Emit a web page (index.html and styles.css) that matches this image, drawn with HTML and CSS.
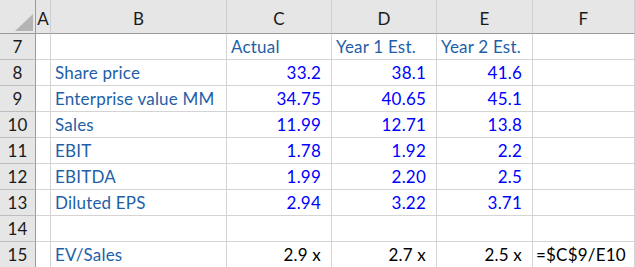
FILE: index.html
```html
<!DOCTYPE html>
<html>
<head>
<meta charset="utf-8">
<link rel="stylesheet" href="styles.css">
</head>
<body>
<div class="sheet">
  <div class="hdr corner"><span class="tri"></span></div>
  <div class="hdr col">A</div>
  <div class="hdr col">B</div>
  <div class="hdr col">C</div>
  <div class="hdr col">D</div>
  <div class="hdr col">E</div>
  <div class="hdr col">F</div>

  <div class="hdr row">7</div>
  <div class="c"></div>
  <div class="c"></div>
  <div class="c lbl">Actual</div>
  <div class="c lbl">Year 1 Est.</div>
  <div class="c lbl">Year 2 Est.</div>
  <div class="c"></div>

  <div class="hdr row">8</div>
  <div class="c"></div>
  <div class="c lbl">Share price</div>
  <div class="c num">33.2</div>
  <div class="c num">38.1</div>
  <div class="c num">41.6</div>
  <div class="c"></div>

  <div class="hdr row">9</div>
  <div class="c"></div>
  <div class="c lbl">Enterprise value MM</div>
  <div class="c num">34.75</div>
  <div class="c num">40.65</div>
  <div class="c num">45.1</div>
  <div class="c"></div>

  <div class="hdr row">10</div>
  <div class="c"></div>
  <div class="c lbl">Sales</div>
  <div class="c num">11.99</div>
  <div class="c num">12.71</div>
  <div class="c num">13.8</div>
  <div class="c"></div>

  <div class="hdr row">11</div>
  <div class="c"></div>
  <div class="c lbl">EBIT</div>
  <div class="c num">1.78</div>
  <div class="c num">1.92</div>
  <div class="c num">2.2</div>
  <div class="c"></div>

  <div class="hdr row">12</div>
  <div class="c"></div>
  <div class="c lbl">EBITDA</div>
  <div class="c num">1.99</div>
  <div class="c num">2.20</div>
  <div class="c num">2.5</div>
  <div class="c"></div>

  <div class="hdr row">13</div>
  <div class="c"></div>
  <div class="c lbl">Diluted EPS</div>
  <div class="c num">2.94</div>
  <div class="c num">3.22</div>
  <div class="c num">3.71</div>
  <div class="c"></div>

  <div class="hdr row">14</div>
  <div class="c"></div>
  <div class="c"></div>
  <div class="c"></div>
  <div class="c"></div>
  <div class="c"></div>
  <div class="c"></div>

  <div class="hdr row">15</div>
  <div class="c"></div>
  <div class="c lbl">EV/Sales</div>
  <div class="c num black">2.9 x</div>
  <div class="c num black">2.7 x</div>
  <div class="c num black">2.5 x</div>
  <div class="c formula">=$C$9/E10</div>
</div>
</body>
</html>
```

FILE: styles.css
```css
html, body {
  margin: 0;
  padding: 0;
  background: #ffffff;
}
body {
  font-family: Lato, "Open Sans", sans-serif;
  font-size: 17px;
  letter-spacing: 0.2px;
  overflow: hidden;
}
.sheet {
  display: grid;
  grid-template-columns: 36px 15px 176px 105px 105px 96px 102px;
  grid-template-rows: 34px repeat(9, 26px);
  width: 635px;
}
.sheet > div {
  box-sizing: border-box;
  display: flex;
  align-items: flex-end;
  white-space: nowrap;
  overflow: hidden;
  line-height: 20px;
}
.c {
  border-right: 1px solid #d4d4d4;
  border-bottom: 1px solid #d4d4d4;
  padding: 0 4px 2px 4px;
}
.hdr {
  background: #e6e6e6;
  color: #1a1a1a;
  justify-content: center;
}
.hdr.col {
  border-right: 1px solid #cfcfcf;
  border-bottom: 1px solid #9b9b9b;
  padding-bottom: 4px;
}
.hdr.corner {
  position: relative;
  border-right: 1px solid #9b9b9b;
  border-bottom: 1px solid #9b9b9b;
}
.tri {
  position: absolute;
  right: 2px;
  bottom: 2px;
  width: 0;
  height: 0;
  border-style: solid;
  border-width: 0 0 17px 18px;
  border-color: transparent transparent #b4b4b4 transparent;
}
.hdr.row {
  border-right: 1px solid #9b9b9b;
  border-bottom: 1px solid #bdbdbd;
  padding-bottom: 2px;
}
.lbl {
  color: #1e5fa8;
}
.num {
  color: #0000ff;
  justify-content: flex-end;
  padding-right: 10px;
}
.num.black {
  color: #000000;
}
.formula {
  color: #000000;
  padding-left: 3px;
}
```
